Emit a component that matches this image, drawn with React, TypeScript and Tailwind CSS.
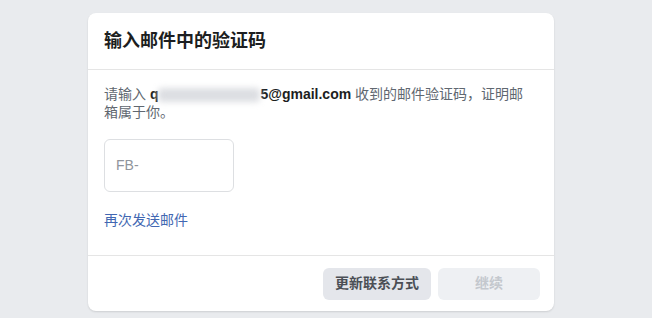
export default function App() {
  return (
    <div
      className="w-[652px] h-[318px] bg-[#e9ebee] pt-[13px] pl-[88px]"
      style={{ fontFamily: '"Liberation Sans", "Noto Sans CJK SC", sans-serif' }}
    >
      <div className="w-[466px] h-[298px] bg-white rounded-lg shadow-[0_1px_2px_rgba(0,0,0,0.12)] flex flex-col">
        <div className="h-[57px] flex items-center px-4 border-b border-[#e5e5e5] shrink-0">
          <h2 className="text-[18px] font-bold text-[#1c1e21]">输入邮件中的验证码</h2>
        </div>

        <div className="flex-1 px-4 pt-[15px]">
          <p className="w-[428px] text-[14px] leading-[18px] text-[#606770]">
            请输入{" "}
            <span className="font-bold text-[#1c1e21]">
              q
              <span className="inline-block align-middle w-[102px] h-[14px] bg-[#dcdee2] blur-[3px] rounded"></span>
              5@gmail.com
            </span>{" "}
            收到的邮件验证码，证明邮箱属于你。
          </p>
          <div className="mt-[18px] w-[130px] h-[53px] border border-[#dddfe2] rounded-md flex items-center px-[11px]">
            <input
              placeholder="FB-"
              className="w-full outline-none text-[14px] text-[#1c1e21] placeholder:text-[#90949c] bg-transparent"
            />
          </div>
          <a className="block mt-[19px] text-[14px] leading-[18px] text-[#4267b2] cursor-pointer">
            再次发送邮件
          </a>
        </div>

        <div className="h-[56px] border-t border-[#e5e5e5] flex items-center justify-end gap-[7px] pr-[14px] shrink-0">
          <button className="w-[108px] h-[32px] rounded-md bg-[#e4e6eb] text-[14px] font-bold text-[#4b4f56]">
            更新联系方式
          </button>
          <button
            disabled
            className="w-[102px] h-[32px] rounded-md bg-[#eef0f3] text-[14px] font-bold text-[#c4c8ce]"
          >
            继续
          </button>
        </div>
      </div>
    </div>
  );
}
